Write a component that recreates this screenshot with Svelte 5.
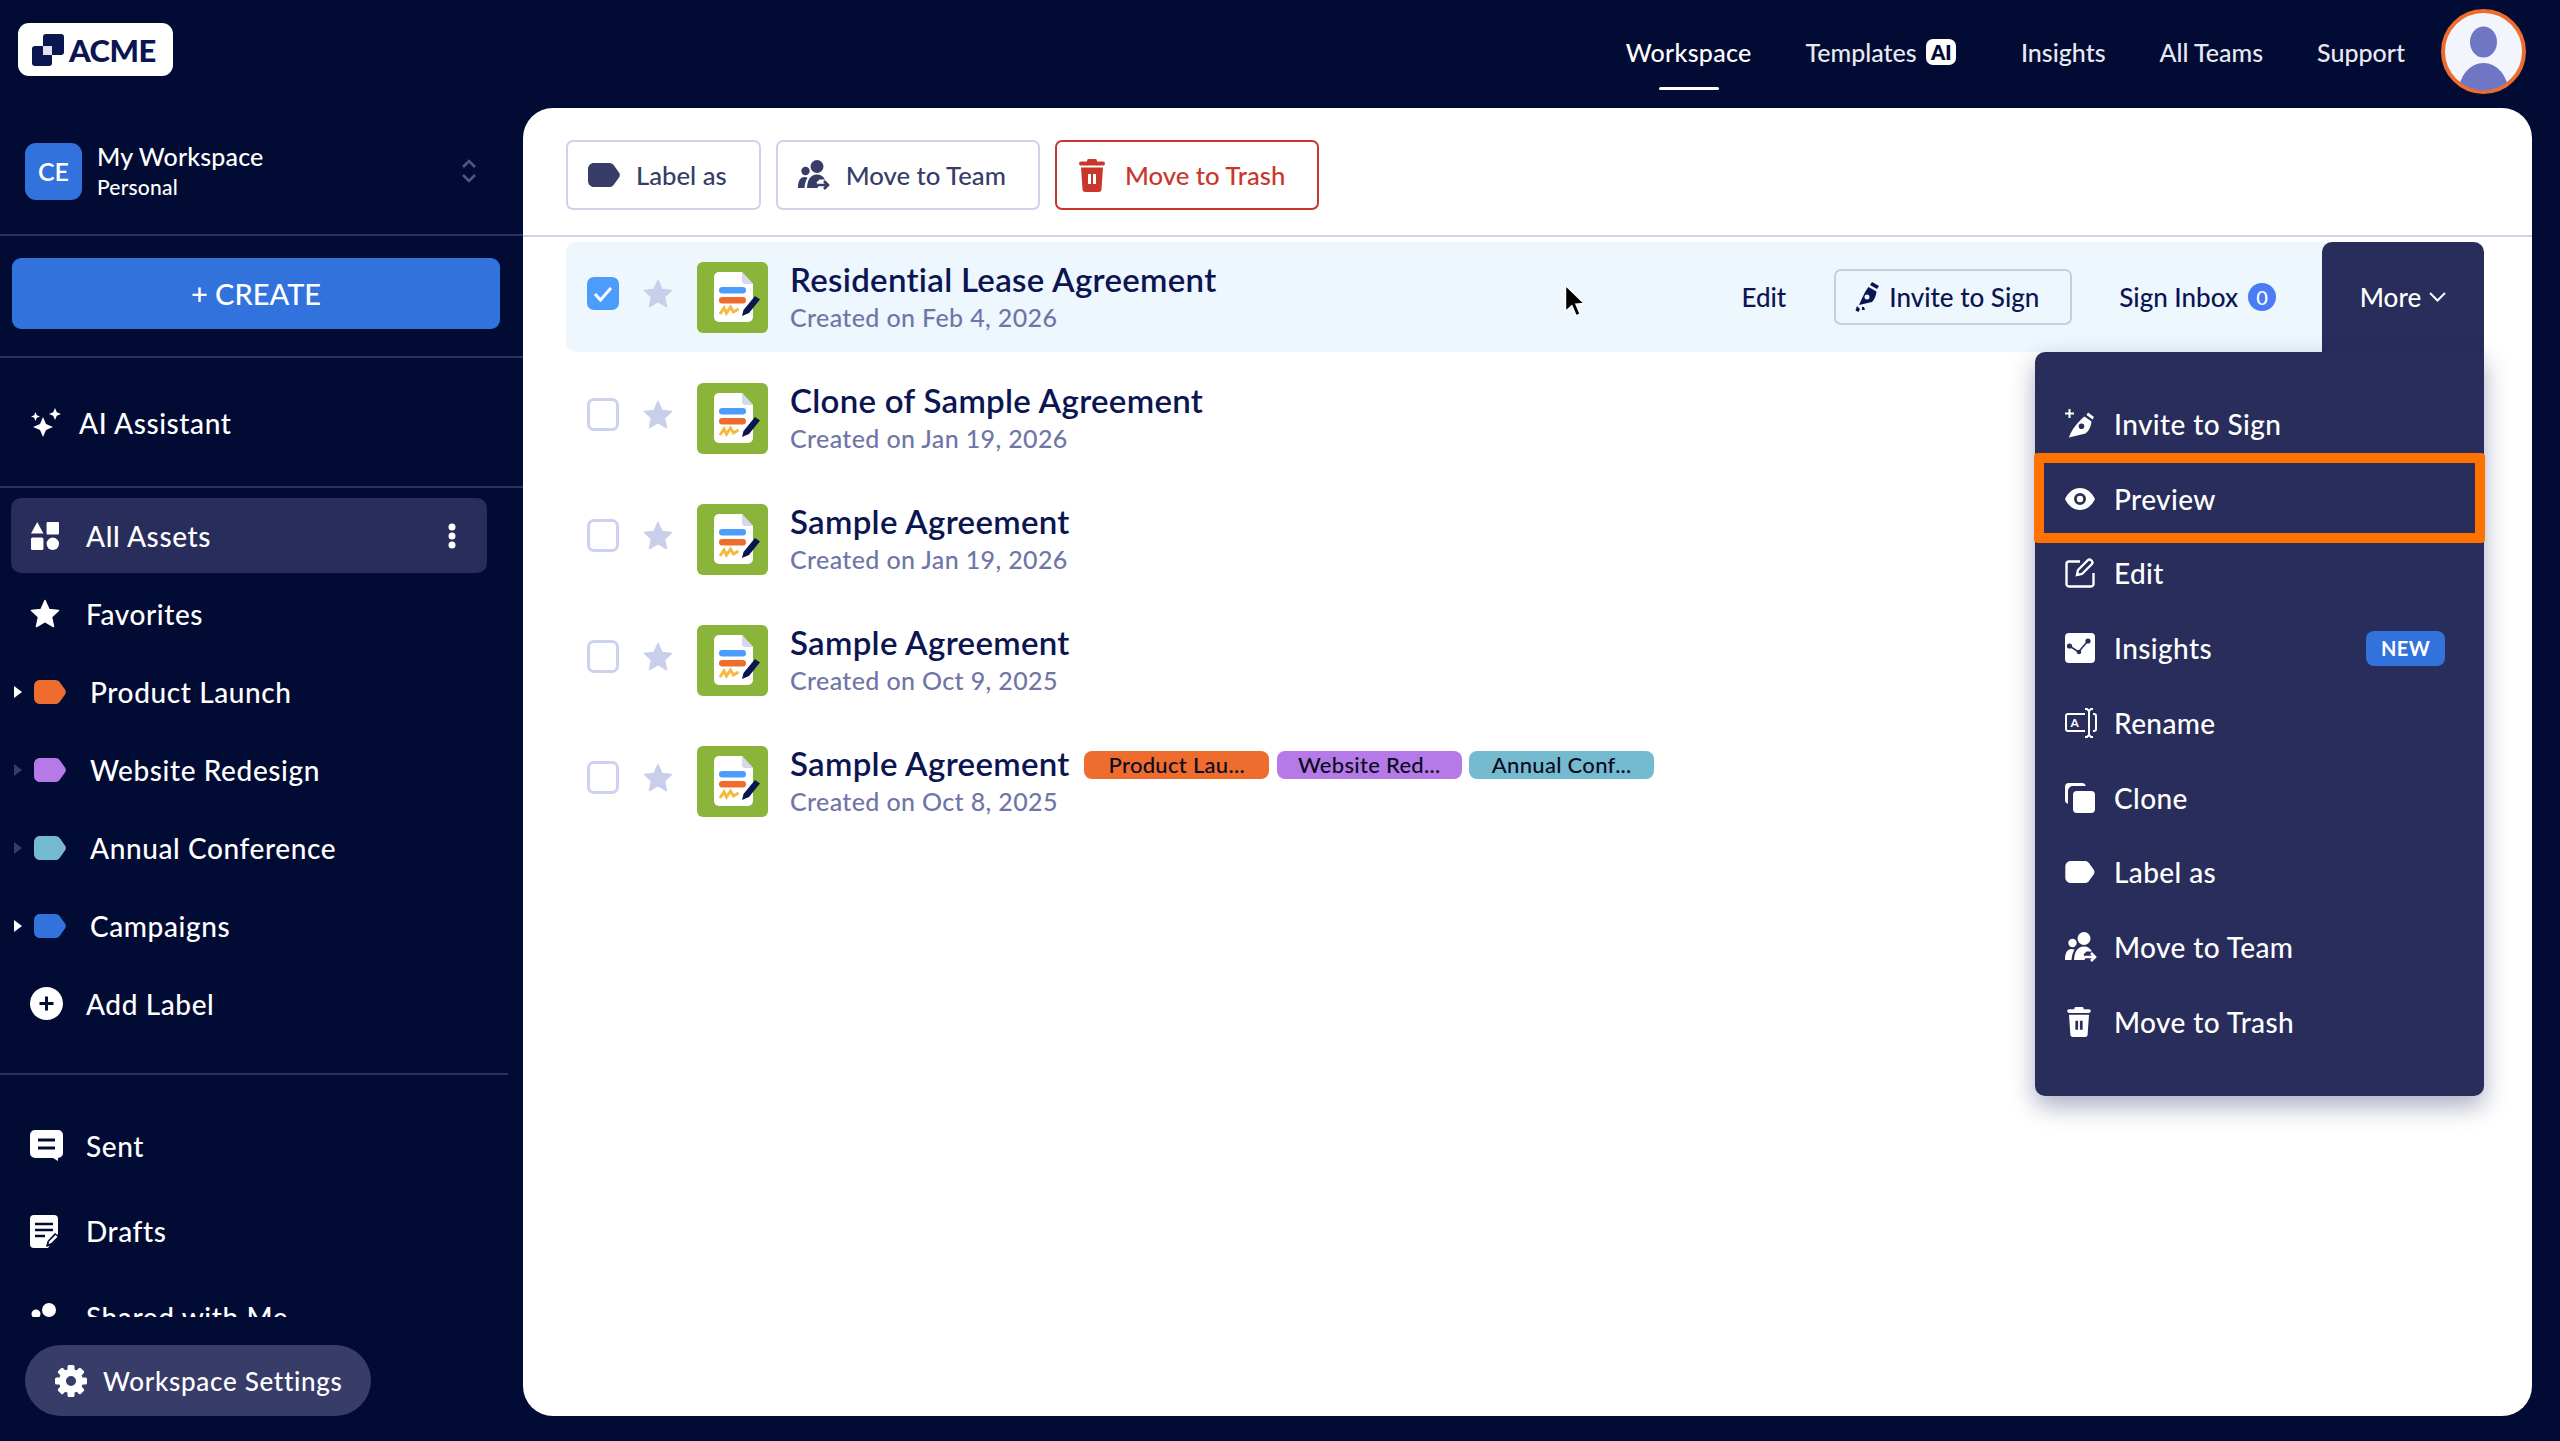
<script>
  const labels = [
    { name: "Product Launch", color: "#ee6c2d", bright: true },
    { name: "Website Redesign", color: "#b57ae8", bright: false },
    { name: "Annual Conference", color: "#75bbd0", bright: false },
    { name: "Campaigns", color: "#3272dc", bright: true }
  ];

  const docs = [
    { title: "Residential Lease Agreement", date: "Created on Feb 4, 2026", selected: true },
    { title: "Clone of Sample Agreement", date: "Created on Jan 19, 2026" },
    { title: "Sample Agreement", date: "Created on Jan 19, 2026" },
    { title: "Sample Agreement", date: "Created on Oct 9, 2025" },
    {
      title: "Sample Agreement",
      date: "Created on Oct 8, 2025",
      tags: [
        { text: "Product Lau...", color: "#ee6c2d" },
        { text: "Website Red...", color: "#b57ae8" },
        { text: "Annual Conf...", color: "#75bbd0" }
      ]
    }
  ];

  const menu = [
    { icon: "invite", text: "Invite to Sign" },
    { icon: "eye", text: "Preview", marked: true },
    { icon: "edit", text: "Edit" },
    { icon: "insights", text: "Insights", isNew: true },
    { icon: "rename", text: "Rename" },
    { icon: "clone", text: "Clone" },
    { icon: "tag", text: "Label as" },
    { icon: "team", text: "Move to Team" },
    { icon: "trash", text: "Move to Trash" }
  ];

  const teeth = [0, 45, 90, 135, 180, 225, 270, 315];
</script>

{#snippet tagIcon(color)}
  <svg width="32" height="24" viewBox="0 0 32 24"><path fill={color} d="M6 0h15c2.200 0 3.600.7 4.800 2.300l5.200 7.200c1.100 1.600 1.100 3.400 0 5l-5.200 7.200C24.600 23.300 23.200 24 21 24H6c-3.400 0-6-2.600-6-6V6c0-3.400 2.600-6 6-6z"/></svg>
{/snippet}

{#snippet teamIcon(color)}
  <svg width="32" height="30" viewBox="0 0 32 30" fill={color}>
    <circle cx="19" cy="6.500" r="6.500"/>
    <circle cx="7.500" cy="11" r="4.200"/>
    <path d="M9 28c.4-7 2.600-13.500 10-13.500 4 0 6.500 2 8 5h-5.500l-3 3 2 3-1 2.500z"/>
    <path d="M0 28c0-6 1.500-11 6.500-11 1.200 0 2.200.3 3 .8C7.800 20.500 6.800 24 6.500 28z"/>
    <path d="M20 25h10M26 21l4 4-4 4" fill="none" stroke={color} stroke-width="2.600"/>
  </svg>
{/snippet}

{#snippet trashIcon(color, w, h)}
  <svg width={w} height={h} viewBox="0 0 26 33" fill={color}>
    <rect x="8" y="0" width="10" height="4" rx="1.500"/>
    <rect x="0" y="2.500" width="26" height="4" rx="2"/>
    <path fill-rule="evenodd" d="M2 8.500h22l-1.500 21.500a3 3 0 0 1-3 3h-13a3 3 0 0 1-3-3zM9 15v10h3V15zM14 15v10h3V15z"/>
  </svg>
{/snippet}

{#snippet nib(color)}
  <svg width="26" height="30" viewBox="0 0 26 30" fill={color}>
    <path d="M17 0l7 4-2 3-7-4z"/>
    <path fill-rule="evenodd" d="M13.500 5l8 4.500c-.5 4.500-2 8-4.500 10.500L4 23c2-4 5.500-13 9.500-18zM12 12.500a2.500 2.500 0 1 0 0 5 2.500 2.500 0 0 0 0-5z"/>
    <path d="M2 24l3 3-1.500 3-3-1.500zM7 25h2l1 3H7z"/>
  </svg>
{/snippet}

{#snippet menuIcon(name)}
  {#if name === "invite"}
    <svg width="30" height="30" viewBox="0 0 30 30" fill="#fff">
      <path d="M3.500 0h2v3.500H9v2H5.500V9h-2V5.500H0v-2h3.500z"/>
      <path d="M23 3.500l6 4.500-1.500 2.500-6-4.500z"/>
      <path fill-rule="evenodd" d="M19.500 7.500l7 5c-.5 5-3 10-6 12L4 28.500c2-7 9-16 15.500-21zM16.500 14.500a2.800 2.800 0 1 0 0 5.600 2.800 2.800 0 0 0 0-5.600z"/>
    </svg>
  {:else if name === "eye"}
    <svg width="30" height="22" viewBox="0 0 30 22" fill="#fff">
      <path fill-rule="evenodd" d="M15 0C8.500 0 3 4.500 0 11c3 6.500 8.500 11 15 11s12-4.500 15-11C27 4.500 21.500 0 15 0zm0 5a6 6 0 1 1 0 12 6 6 0 0 1 0-12z"/>
      <circle cx="15" cy="11" r="3.200"/>
    </svg>
  {:else if name === "edit"}
    <svg width="30" height="30" viewBox="0 0 30 30" fill="none" stroke="#fff" stroke-width="2.400">
      <path d="M15 3.500H4a2.500 2.500 0 0 0-2.500 2.500v20A2.500 2.500 0 0 0 4 28.500h22a2.500 2.500 0 0 0 2.500-2.500V15"/>
      <path d="M13 12L22.500 2.500a2.800 2.800 0 0 1 4 4L17 16l-5 1z"/>
    </svg>
  {:else if name === "insights"}
    <svg width="30" height="30" viewBox="0 0 30 30">
      <rect width="30" height="30" rx="4" fill="#fff"/>
      <path d="M4.500 13l9 6L22 9" fill="none" stroke="#292d5b" stroke-width="1.600"/>
      <circle cx="4.500" cy="13" r="2.600" fill="#292d5b"/>
      <circle cx="14" cy="19" r="2.300" fill="#292d5b"/>
      <circle cx="23" cy="8" r="2.600" fill="#292d5b"/>
    </svg>
  {:else if name === "rename"}
    <svg width="32" height="30" viewBox="0 0 32 30" fill="none" stroke="#fff" stroke-width="2">
      <path d="M20 6H3a2 2 0 0 0-2 2v13a2 2 0 0 0 2 2h17"/>
      <path d="M28 6h1a2 2 0 0 1 2 2v13a2 2 0 0 1-2 2h-1"/>
      <path d="M24 3v24M20 1h2l2 2 2-2h2M20 29h2l2-2 2 2h2"/>
      <text x="5.500" y="19" fill="#fff" stroke="none" font-size="12" font-weight="700" font-family="Lato, sans-serif">A</text>
    </svg>
  {:else if name === "clone"}
    <svg width="30" height="30" viewBox="0 0 30 30" fill="#fff">
      <path d="M4 0h13a4 4 0 0 1 3.800 3H8a5 5 0 0 0-5 5v12.800A4 4 0 0 1 0 17V4a4 4 0 0 1 4-4z"/>
      <rect x="8" y="8" width="22" height="22" rx="4"/>
    </svg>
  {:else if name === "tag"}
    <svg width="30" height="22" viewBox="0 0 32 24"><path fill="#fff" d="M6 0h15c2.200 0 3.600.7 4.800 2.300l5.200 7.200c1.100 1.600 1.100 3.400 0 5l-5.200 7.200C24.600 23.300 23.200 24 21 24H6c-3.400 0-6-2.600-6-6V6c0-3.400 2.600-6 6-6z"/></svg>
  {:else if name === "team"}
    {@render teamIcon("#fff")}
  {:else}
    <span class="trash-nudge">{@render trashIcon("#fff", 24, 30)}</span>
  {/if}
{/snippet}

<div class="page">
  <aside class="sidebar">
    <div class="brand">
      <div class="logo">
        <svg width="32" height="32" viewBox="0 0 32 32">
          <rect x="0" y="12" width="20" height="20" rx="3" fill="#0a1551"/>
          <rect x="11" y="0" width="21" height="21" rx="3" fill="#0a1551"/>
          <rect x="11" y="12" width="9" height="9" fill="#dfe2f0"/>
        </svg>
        <span>ACME</span>
      </div>
    </div>

    <div class="workspace">
      <div class="ws-avatar">CE</div>
      <div class="ws-text">
        <div class="ws-name">My Workspace</div>
        <div class="ws-type">Personal</div>
      </div>
      <svg class="ws-switch" width="16" height="26" viewBox="0 0 16 26" fill="none" stroke="#4f5585" stroke-width="2.600">
        <path d="M2 9l6-6 6 6M2 17l6 6 6-6"/>
      </svg>
    </div>

    <div class="create-wrap">
      <button class="create">+ CREATE</button>
    </div>

    <div class="assistant">
      <svg width="30" height="30" viewBox="0 0 30 30" fill="#fff">
        <path d="M12 9l3 7 7 3-7 3-3 7-3-7-7-3 7-3z"/>
        <path d="M24 0l1.800 4.200L30 6l-4.200 1.800L24 12l-1.800-4.200L18 6l4.200-1.800z"/>
        <path d="M4.500 4l1.300 3.200L9 8.500 5.800 9.800 4.500 13 3.200 9.800 0 8.500l3.200-1.300z"/>
      </svg>
      <span>AI Assistant</span>
    </div>

    <div class="nav">
      <div class="nav-row active">
        <svg class="nav-icon" width="30" height="28" viewBox="0 0 27 27" fill="#fff">
          <path d="M6 0l6 11H0z"/>
          <rect x="15" y="0" width="12" height="12" rx="1"/>
          <rect x="0" y="15" width="12" height="12" rx="1.500"/>
          <circle cx="21" cy="21" r="6"/>
        </svg>
        <span>All Assets</span>
        <svg class="dots" width="8" height="26" viewBox="0 0 8 26" fill="#fff">
          <circle cx="4" cy="4" r="3.500"/><circle cx="4" cy="13" r="3.500"/><circle cx="4" cy="22" r="3.500"/>
        </svg>
      </div>
      <div class="nav-row">
        <svg class="nav-icon" width="30" height="29" viewBox="0 0 30 29" fill="#fff">
          <path stroke="#fff" stroke-width="1.500" stroke-linejoin="round" d="M15 1.500l4 9 9.500 1-7 6.500 2 9.500-8.500-5-8.500 5 2-9.500-7-6.500 9.500-1z"/>
        </svg>
        <span>Favorites</span>
      </div>

      {#each labels as label}
        <div class="nav-row label-row">
          <i class="caret" class:bright={label.bright}></i>
          {@render tagIcon(label.color)}
          <span>{label.name}</span>
        </div>
      {/each}

      <div class="nav-row">
        <svg class="nav-icon" width="33" height="33" viewBox="0 0 33 33">
          <circle cx="16.500" cy="16.500" r="16.500" fill="#fff"/>
          <path d="M16.500 9.500v14M9.500 16.500h14" stroke="#020b33" stroke-width="3"/>
        </svg>
        <span>Add Label</span>
      </div>

      <div class="nav-split"></div>

      <div class="nav-row low">
        <svg class="nav-icon" width="33" height="31" viewBox="0 0 33 31">
          <path fill="#fff" d="M5 0h23a5 5 0 0 1 5 5v18a5 5 0 0 1-5 5v3l-5-3H5a5 5 0 0 1-5-5V5a5 5 0 0 1 5-5z"/>
          <path d="M8 10h17M8 18h17" stroke="#020b33" stroke-width="3"/>
        </svg>
        <span>Sent</span>
      </div>
      <div class="nav-row low">
        <svg class="nav-icon" width="30" height="33" viewBox="0 0 30 33">
          <path fill="#fff" d="M4 0h20a4 4 0 0 1 4 4v15l-10 14H4a4 4 0 0 1-4-4V4a4 4 0 0 1 4-4z"/>
          <path d="M5 9h18M5 15h18M5 21h10" stroke="#020b33" stroke-width="2.600"/>
          <path d="M16 32l1.500-6L25 18l5 4-8 8z" fill="#020b33"/>
          <path d="M18.500 29l.6-2.500L25.500 20l2 1.800-6.500 6.500z" fill="#fff"/>
        </svg>
        <span>Drafts</span>
      </div>
      <div class="nav-row low">
        <svg class="nav-icon" width="30" height="30" viewBox="0 0 30 30" fill="#fff">
          <circle cx="19" cy="8" r="7"/>
          <circle cx="6" cy="12" r="4.500"/>
          <path d="M9 29c0-7 3-13 10-13s10 6 10 13z"/>
        </svg>
        <span>Shared with Me</span>
      </div>
    </div>

    <div class="settings-wrap">
      <div class="settings">
        <svg width="32" height="32" viewBox="0 0 32 32">
          {#each teeth as deg}
            <rect x="12.500" y="0" width="7" height="8" rx="1.500" fill="#fff" transform="rotate({deg} 16 16)"/>
          {/each}
          <circle cx="16" cy="16" r="8.500" fill="none" stroke="#fff" stroke-width="7"/>
        </svg>
        <span>Workspace Settings</span>
      </div>
    </div>
  </aside>

  <div class="right">
    <header class="topbar">
      <a class="tab current">Workspace</a>
      <a class="tab templates">Templates <b class="ai">AI</b></a>
      <a class="tab">Insights</a>
      <a class="tab">All Teams</a>
      <a class="tab">Support</a>
      <div class="user">
        <svg width="85" height="85" viewBox="0 0 85 85">
          <defs><clipPath id="userclip"><circle cx="42.500" cy="42.500" r="39"/></clipPath></defs>
          <circle cx="42.500" cy="42.500" r="40.500" fill="#f3f5fd" stroke="#ee6c2d" stroke-width="4"/>
          <g clip-path="url(#userclip)" fill="#6f76c4">
            <ellipse cx="42.500" cy="33" rx="13.500" ry="15.500"/>
            <ellipse cx="42.500" cy="84" rx="25" ry="30"/>
          </g>
        </svg>
      </div>
    </header>

    <main class="panel">
      <div class="toolbar">
        <button class="tool">{@render tagIcon("#373c68")}<span>Label as</span></button>
        <button class="tool">{@render teamIcon("#373c68")}<span>Move to Team</span></button>
        <button class="tool danger">{@render trashIcon("#c9372c", 26, 33)}<span>Move to Trash</span></button>
      </div>

      <div class="list">
        {#each docs as doc}
          <div class="row" class:selected={doc.selected}>
            <span class="check">
              {#if doc.selected}
                <svg width="20" height="16" viewBox="0 0 20 16" fill="none" stroke="#fff" stroke-width="3"><path d="M2 8l5.500 6L18 2"/></svg>
              {/if}
            </span>
            <svg class="star" width="30" height="29" viewBox="0 0 30 29" fill="#c9ceea">
              <path stroke="#c9ceea" stroke-width="1.500" stroke-linejoin="round" d="M15 1.500l4 9 9.500 1-7 6.500 2 9.500-8.500-5-8.500 5 2-9.500-7-6.500 9.500-1z"/>
            </svg>
            <svg class="doc" width="71" height="71" viewBox="0 0 71 71">
              <rect width="71" height="71" rx="6" fill="#8bb53a"/>
              <path fill="#fff" d="M22 10h23l11 12v33a5 5 0 0 1-5 5H22a5 5 0 0 1-5-5V15a5 5 0 0 1 5-5z"/>
              <path fill="#d5d8ec" d="M45 10l11 12h-8a3 3 0 0 1-3-3z"/>
              <rect x="22" y="25" width="27" height="6.500" rx="3.200" fill="#4c9cfb"/>
              <rect x="22" y="35" width="27" height="6.500" rx="3.200" fill="#ee6c2d"/>
              <path d="M23 52l4-6 2.500 5 4-6 3 5 5-3" fill="none" stroke="#f5b93f" stroke-width="3"/>
              <path d="M45 54l1.500-6L58 34l5 3.500L52 51z" fill="#0a1551"/>
            </svg>
            <div class="info">
              <div class="title-line">
                <span class="title">{doc.title}</span>
                {#each doc.tags ?? [] as tag}
                  <span class="pill" style="background: {tag.color}">{tag.text}</span>
                {/each}
              </div>
              <div class="date">{doc.date}</div>
            </div>

            {#if doc.selected}
              <div class="actions">
                <span class="act">Edit</span>
                <button class="invite">{@render nib("#0a1551")}<span>Invite to Sign</span></button>
                <span class="act inbox">Sign Inbox <i class="count">0</i></span>
                <div class="more">
                  <span>More</span>
                  <svg width="17" height="10" viewBox="0 0 17 10" fill="none" stroke="#fff" stroke-width="2"><path d="M1 1l7.500 7.500L16 1"/></svg>
                  <div class="dropdown">
                    {#each menu as item}
                      <div class="menu-item" class:marked={item.marked}>
                        <span class="menu-icon">{@render menuIcon(item.icon)}</span>
                        <span>{item.text}</span>
                        {#if item.isNew}<em class="new">NEW</em>{/if}
                      </div>
                    {/each}
                  </div>
                </div>
              </div>
              <svg class="cursor" width="24" height="34" viewBox="0 0 22 32">
                <path d="M2 1v25l6-5.500 4 9.500 4-1.700-4-9.300 8-.5z" fill="#000" stroke="#fff" stroke-width="1.500"/>
              </svg>
            {/if}
          </div>
        {/each}
      </div>
    </main>
  </div>
</div>

<style>
  :global(body) {
    margin: 0;
    background: #020b33;
  }

  .page {
    display: flex;
    width: 2560px;
    height: 1441px;
    overflow: hidden;
    background: #020b33;
    color: #fff;
    font-family: Lato, "Liberation Sans", sans-serif;
    font-weight: 500;
  }

  button {
    font: inherit;
    cursor: pointer;
  }

  /* sidebar */
  .sidebar {
    display: flex;
    flex-direction: column;
    flex: 0 0 523px;
    height: 100%;
  }

  .brand {
    height: 108px;
    padding: 23px 0 0 18px;
    box-sizing: border-box;
  }

  .logo {
    display: flex;
    align-items: center;
    gap: 5px;
    width: 155px;
    height: 53px;
    padding-left: 14px;
    box-sizing: border-box;
    background: #fff;
    border-radius: 11px;
    color: #0a1551;
    font-size: 31px;
    font-weight: 900;
    letter-spacing: -0.5px;
  }

  .workspace {
    display: flex;
    align-items: center;
    height: 128px;
    padding: 0 46px 0 25px;
    box-sizing: border-box;
    border-bottom: 2px solid #2b3060;
  }

  .ws-avatar {
    display: flex;
    align-items: center;
    justify-content: center;
    width: 57px;
    height: 57px;
    border-radius: 11px;
    background: #3272dc;
    font-size: 25px;
    font-weight: 600;
  }

  .ws-text {
    flex: 1;
    margin-left: 15px;
  }

  .ws-name {
    font-size: 25px;
    line-height: 32px;
    letter-spacing: 0.15px;
  }

  .ws-type {
    font-size: 21px;
    line-height: 30px;
    letter-spacing: 0.2px;
  }

  .create-wrap {
    height: 122px;
    padding: 22px 23px 0 12px;
    box-sizing: border-box;
    border-bottom: 2px solid #2b3060;
  }

  .create {
    width: 100%;
    height: 71px;
    border: 0;
    border-radius: 9px;
    background: #3272dc;
    color: #fff;
    font-size: 29px;
  }

  .assistant {
    display: flex;
    align-items: center;
    gap: 18px;
    height: 130px;
    padding: 2px 0 0 31px;
    box-sizing: border-box;
    border-bottom: 2px solid #2b3060;
    font-size: 28px;
    letter-spacing: 0.6px;
  }

  .nav {
    flex: 1;
    min-height: 0;
    overflow: hidden;
    padding-top: 10px;
    font-size: 28px;
    letter-spacing: 0.6px;
  }

  .nav-row {
    position: relative;
    display: flex;
    align-items: center;
    height: 75px;
    width: 476px;
    margin: 0 0 3px 11px;
    border-radius: 10px;
  }

  .nav-icon {
    flex: 0 0 auto;
    margin: 0 0 0 19px;
  }

  .nav-row > span {
    position: absolute;
    left: 75px;
  }

  .nav-row.active {
    background: #292d5b;
  }

  .dots {
    position: absolute;
    right: 31px;
  }

  .label-row > svg {
    margin-left: 23px;
  }

  .nav .label-row > span {
    left: 79px;
  }

  .caret {
    position: absolute;
    left: 3px;
    width: 0;
    height: 0;
    border-left: 8px solid #373c68;
    border-top: 6.500px solid transparent;
    border-bottom: 6.500px solid transparent;
  }

  .caret.bright {
    border-left-color: #fff;
  }

  .nav-split {
    width: 508px;
    height: 2px;
    margin-top: 31.500px;
    background: #2b3060;
  }

  .nav-split + .nav-row {
    margin-top: 33px;
  }

  .low {
    height: 76px;
    margin-bottom: 9.500px;
  }

  .settings-wrap {
    flex: 0 0 auto;
    height: 124px;
    padding: 28px 0 0 25px;
    box-sizing: border-box;
  }

  .settings {
    display: flex;
    align-items: center;
    gap: 16px;
    width: 346px;
    height: 71px;
    padding-left: 30px;
    box-sizing: border-box;
    border-radius: 36px;
    background: #373c68;
    font-size: 26px;
    letter-spacing: 0.7px;
  }

  /* top area */
  .right {
    display: flex;
    flex-direction: column;
    flex: 1;
    min-width: 0;
  }

  .topbar {
    position: relative;
    display: flex;
    align-items: center;
    justify-content: flex-end;
    gap: 54px;
    flex: 0 0 108px;
    padding: 0 155px 4px 0;
    box-sizing: border-box;
    font-size: 25px;
  }

  .tab {
    position: relative;
    color: #e8e9f3;
  }

  .tab.current {
    color: #fff;
    letter-spacing: 0.3px;
  }

  .templates {
    margin-right: 10.500px;
  }

  .tab.current::after {
    content: "";
    position: absolute;
    left: 33px;
    right: 33px;
    bottom: -23px;
    height: 3px;
    border-radius: 2px;
    background: #fff;
  }

  .ai {
    display: inline-block;
    margin-left: 3px;
    padding: 0 5px;
    border-radius: 7px;
    background: #fff;
    color: #020b33;
    font-size: 20px;
    line-height: 26px;
    font-weight: 800;
    vertical-align: 2px;
  }

  .user {
    position: absolute;
    left: 1918px;
    top: 9px;
    height: 85px;
  }

  /* panel */
  .panel {
    flex: 1;
    min-height: 0;
    margin: 0 28px 25px 0;
    padding: 0 48px 0 43px;
    background: #fff;
    border-radius: 30px;
    color: #0a1551;
  }

  .toolbar {
    display: flex;
    align-items: center;
    gap: 15px;
    height: 129px;
    margin: 0 -48px 5px -43px;
    padding: 7px 0 0 43px;
    box-sizing: border-box;
    border-bottom: 2px solid #cdd2ee;
  }

  .tool {
    display: flex;
    align-items: center;
    gap: 16px;
    height: 70px;
    padding: 0 32px 0 20px;
    border: 2px solid #cdd2ee;
    border-radius: 7px;
    background: #fff;
    color: #373c68;
    font-size: 25.700px;
  }

  .tool.danger {
    gap: 20px;
    padding-left: 22px;
    border-color: #c9372c;
    color: #c9372c;
  }

  .list {
    display: flex;
    flex-direction: column;
    gap: 11px;
  }

  .row {
    position: relative;
    display: flex;
    align-items: center;
    height: 110px;
    padding-left: 21px;
    border-radius: 10px;
  }

  .row.selected {
    background: #eef6fe;
  }

  .check {
    display: flex;
    align-items: center;
    justify-content: center;
    width: 32px;
    height: 33px;
    margin-top: -7px;
    box-sizing: border-box;
    border: 3px solid #cdd2ee;
    border-radius: 7px;
    background: #fff;
  }

  .selected .check {
    border-color: #4c9cfb;
    background: #4c9cfb;
  }

  .star {
    margin: -7px 24px 0 24px;
  }

  .doc {
    margin-right: 22px;
  }

  .info {
    display: flex;
    flex-direction: column;
    gap: 2px;
    margin-top: -2px;
  }

  .title-line {
    display: flex;
    align-items: center;
    gap: 7.500px;
  }

  .title {
    margin-right: 7px;
    font-size: 33px;
    line-height: 40px;
    font-weight: 600;
    letter-spacing: 0.3px;
  }

  .pill {
    width: 185px;
    height: 28px;
    margin-top: 4px;
    border-radius: 8px;
    color: #0a0a20;
    font-size: 22px;
    line-height: 28px;
    letter-spacing: 0.3px;
    text-align: center;
  }

  .date {
    color: #6f76a7;
    font-size: 25px;
    line-height: 32px;
    letter-spacing: 0.37px;
  }

  .actions {
    display: flex;
    align-items: center;
    margin-left: auto;
    height: 100%;
    font-size: 26px;
  }

  .act {
    display: flex;
    align-items: center;
    gap: 10px;
  }

  .invite {
    display: flex;
    align-items: center;
    justify-content: center;
    gap: 8px;
    width: 238px;
    height: 56px;
    margin: 0 47px 0 48px;
    padding: 0 12px 0 0;
    border: 2px solid #c8cedc;
    border-radius: 7px;
    background: transparent;
    color: #0a1551;
    font-size: 26px;
  }

  .count {
    display: flex;
    align-items: center;
    justify-content: center;
    width: 28px;
    height: 28px;
    border-radius: 50%;
    background: #4b7bf5;
    color: #fff;
    font-size: 20px;
    font-style: normal;
  }

  .more {
    position: relative;
    display: flex;
    align-items: center;
    justify-content: center;
    gap: 8px;
    width: 162px;
    height: 100%;
    margin-left: 46px;
    border-radius: 10px 10px 0 0;
    background: #292d5b;
    color: #fff;
  }

  .dropdown {
    position: absolute;
    top: 110px;
    right: 0;
    width: 449px;
    padding: 34.500px 0 36.500px;
    border-radius: 10px 0 10px 10px;
    background: #292d5b;
    box-shadow: 0 10px 24px rgba(10, 21, 81, 0.35);
    font-size: 28px;
    letter-spacing: 0.4px;
  }

  .menu-item {
    position: relative;
    display: flex;
    align-items: center;
    height: 74.750px;
    padding-left: 79px;
  }

  .menu-icon {
    position: absolute;
    left: 30px;
    display: flex;
    align-items: center;
  }

  .trash-nudge {
    display: flex;
    margin-left: 2px;
  }

  .marked::after {
    content: "";
    position: absolute;
    inset: -8px -1px -7px -1px;
    border: 10px solid #ff7200;
    border-radius: 4px;
  }

  .new {
    position: absolute;
    right: 39px;
    width: 79px;
    height: 35px;
    border-radius: 8px;
    background: #3272dc;
    font-size: 20px;
    font-style: normal;
    font-weight: 700;
    line-height: 35px;
    text-align: center;
  }

  .cursor {
    position: absolute;
    left: 997px;
    top: 42px;
  }
</style>
